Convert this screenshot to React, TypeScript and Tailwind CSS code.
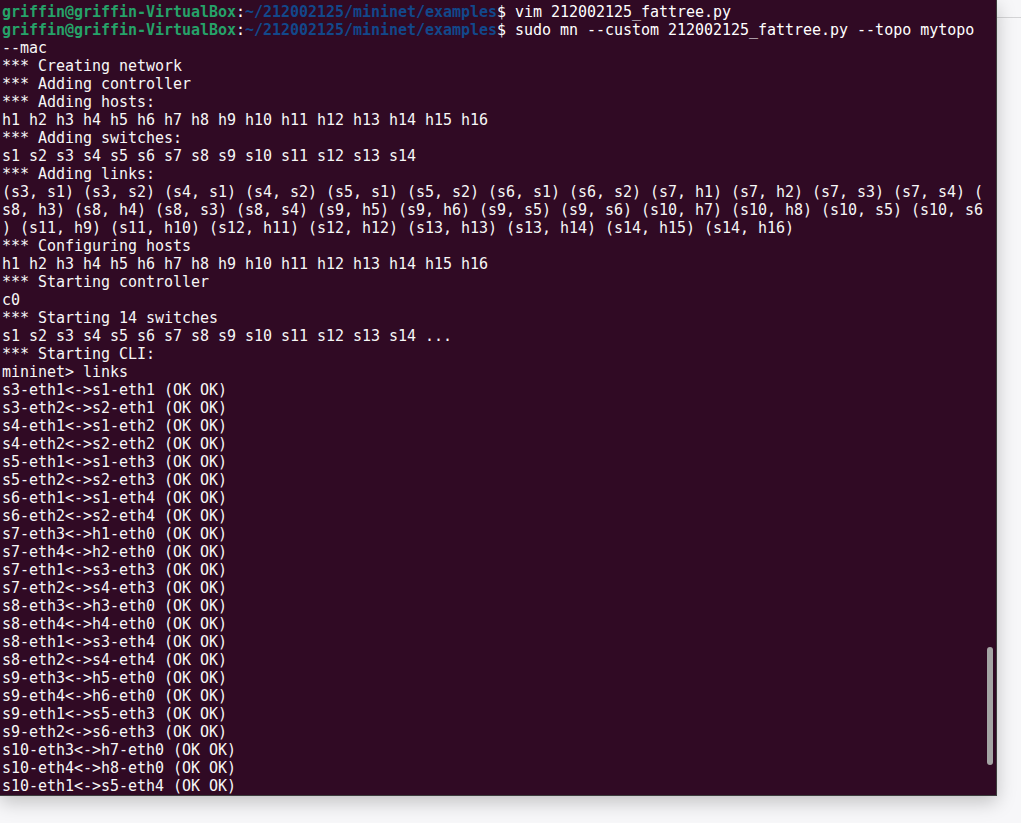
import React from "react";

const prompt = (cmd: string) => (
  <>
    <span className="font-bold text-[#26a269]">griffin@griffin-VirtualBox</span>
    <span className="text-white">:</span>
    <span className="font-bold text-[#12488b]">~/212002125/mininet/examples</span>
    <span className="text-white">$ {cmd}</span>
  </>
);

const plain: string[] = [
  "--mac",
  "*** Creating network",
  "*** Adding controller",
  "*** Adding hosts:",
  "h1 h2 h3 h4 h5 h6 h7 h8 h9 h10 h11 h12 h13 h14 h15 h16",
  "*** Adding switches:",
  "s1 s2 s3 s4 s5 s6 s7 s8 s9 s10 s11 s12 s13 s14",
  "*** Adding links:",
  "(s3, s1) (s3, s2) (s4, s1) (s4, s2) (s5, s1) (s5, s2) (s6, s1) (s6, s2) (s7, h1) (s7, h2) (s7, s3) (s7, s4) (",
  "s8, h3) (s8, h4) (s8, s3) (s8, s4) (s9, h5) (s9, h6) (s9, s5) (s9, s6) (s10, h7) (s10, h8) (s10, s5) (s10, s6",
  ") (s11, h9) (s11, h10) (s12, h11) (s12, h12) (s13, h13) (s13, h14) (s14, h15) (s14, h16)",
  "*** Configuring hosts",
  "h1 h2 h3 h4 h5 h6 h7 h8 h9 h10 h11 h12 h13 h14 h15 h16",
  "*** Starting controller",
  "c0",
  "*** Starting 14 switches",
  "s1 s2 s3 s4 s5 s6 s7 s8 s9 s10 s11 s12 s13 s14 ...",
  "*** Starting CLI:",
  "mininet> links",
  "s3-eth1<->s1-eth1 (OK OK)",
  "s3-eth2<->s2-eth1 (OK OK)",
  "s4-eth1<->s1-eth2 (OK OK)",
  "s4-eth2<->s2-eth2 (OK OK)",
  "s5-eth1<->s1-eth3 (OK OK)",
  "s5-eth2<->s2-eth3 (OK OK)",
  "s6-eth1<->s1-eth4 (OK OK)",
  "s6-eth2<->s2-eth4 (OK OK)",
  "s7-eth3<->h1-eth0 (OK OK)",
  "s7-eth4<->h2-eth0 (OK OK)",
  "s7-eth1<->s3-eth3 (OK OK)",
  "s7-eth2<->s4-eth3 (OK OK)",
  "s8-eth3<->h3-eth0 (OK OK)",
  "s8-eth4<->h4-eth0 (OK OK)",
  "s8-eth1<->s3-eth4 (OK OK)",
  "s8-eth2<->s4-eth4 (OK OK)",
  "s9-eth3<->h5-eth0 (OK OK)",
  "s9-eth4<->h6-eth0 (OK OK)",
  "s9-eth1<->s5-eth3 (OK OK)",
  "s9-eth2<->s6-eth3 (OK OK)",
  "s10-eth3<->h7-eth0 (OK OK)",
  "s10-eth4<->h8-eth0 (OK OK)",
  "s10-eth1<->s5-eth4 (OK OK)",
];

export default function App() {
  return (
    <div className="w-[1021px] h-[823px] overflow-hidden bg-[#f7f7f9] relative">
      <div className="absolute left-[997px] top-[17px] w-[24px] h-px bg-[#d4d4d6]" />
      <div className="relative w-[997px] h-[796px] bg-[#300a24] border-r border-b border-[#3c3c3c] shadow-[0_6px_18px_rgba(0,0,0,0.22)] overflow-hidden">
        <div
          className="pl-[2px] pt-[3px] text-[15px] leading-[18px] text-[#f7f7f7] whitespace-pre tracking-[-0.03px]"
          style={{ fontFamily: '"DejaVu Sans Mono", "Liberation Mono", monospace' }}
        >
          <div>{prompt("vim 212002125_fattree.py")}</div>
          <div>{prompt("sudo mn --custom 212002125_fattree.py --topo mytopo")}</div>
          {plain.map((l, i) => (
            <div key={i}>{l}</div>
          ))}
        </div>
        <div className="absolute left-[987px] top-[647px] w-[6px] h-[118px] rounded-full bg-[#a5a5a5]" />
      </div>
    </div>
  );
}
